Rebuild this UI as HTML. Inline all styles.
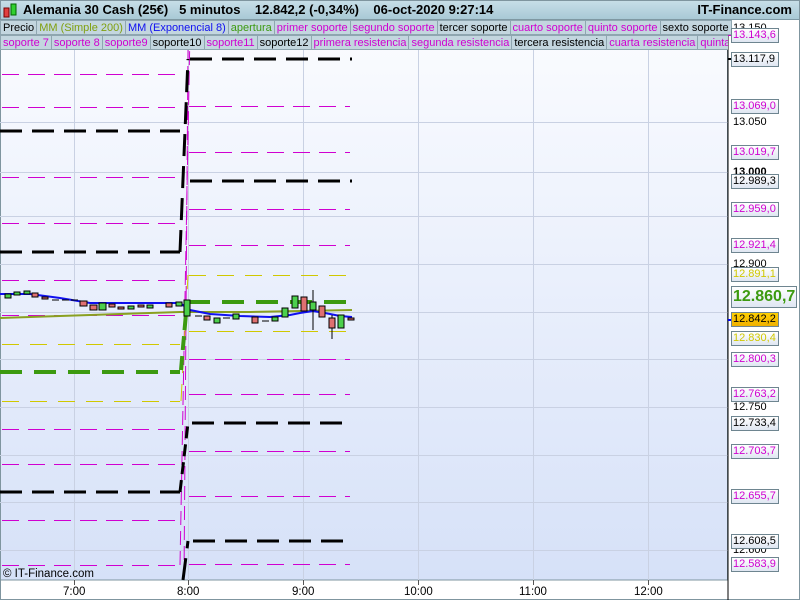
<!DOCTYPE html>
<html><head><meta charset="utf-8"><style>
*{margin:0;padding:0;box-sizing:border-box}
body{width:800px;height:600px;overflow:hidden;background:#fff;font-family:"Liberation Sans",sans-serif;position:relative}
.tbg{position:absolute;left:0;top:0;width:800px;height:20px;background:linear-gradient(#c8dfe8,#a9c9d6);border-bottom:1px solid #7f9aa6}
.title{position:absolute;left:0;top:0;width:800px;height:20px;font-weight:bold;font-size:13px;line-height:20px}
.row{position:absolute;left:0;height:15px;display:flex;font-size:11px;line-height:14px}
.row span{background:#c3d6df;border:1px solid #8fa6b0;border-left:none;padding:0 2px;white-space:nowrap}
.m{color:#d000d0}.k{color:#000}
.lab{position:absolute;left:731px;width:48px;height:15px;border:1px solid #6e8590;background:linear-gradient(#fff,#dfe6f2);font-size:11px;line-height:13px;padding-left:1px;white-space:nowrap;overflow:hidden}
.tick{position:absolute;left:733px;font-size:11px;line-height:12px}
.xl{position:absolute;top:586px;font-size:11.5px}
</style></head><body>
<div class="tbg"></div>
<svg width="800" height="600" style="position:absolute;left:0;top:0">
<defs><linearGradient id="bg" x1="0" y1="0" x2="0" y2="1"><stop offset="0" stop-color="#fbfcff"/><stop offset="1" stop-color="#d6e1f8"/></linearGradient></defs>
<rect x="0" y="20" width="728" height="560" fill="url(#bg)"/>
<rect x="0.5" y="20" width="727" height="560" fill="none" stroke="#7f959f"/>
<rect x="0.5" y="0.5" width="799" height="599" fill="none" stroke="#7f959f"/>
<g stroke="#c9d1e3" stroke-width="1">
<line x1="74.5" y1="50" x2="74.5" y2="580"/><line x1="188.5" y1="50" x2="188.5" y2="580"/><line x1="303.5" y1="50" x2="303.5" y2="580"/><line x1="418.5" y1="50" x2="418.5" y2="580"/><line x1="533.5" y1="50" x2="533.5" y2="580"/><line x1="648.5" y1="50" x2="648.5" y2="580"/>
<line x1="0" y1="122.5" x2="728" y2="122.5"/><line x1="0" y1="172.5" x2="728" y2="172.5"/><line x1="0" y1="216.5" x2="728" y2="216.5"/><line x1="0" y1="264.5" x2="728" y2="264.5"/><line x1="0" y1="312.5" x2="728" y2="312.5"/><line x1="0" y1="359.5" x2="728" y2="359.5"/><line x1="0" y1="407.5" x2="728" y2="407.5"/><line x1="0" y1="455.5" x2="728" y2="455.5"/><line x1="0" y1="502.5" x2="728" y2="502.5"/><line x1="0" y1="550.5" x2="728" y2="550.5"/>
</g>
<g stroke="#d000d0" stroke-width="1" stroke-dasharray="17 9" fill="none">
<line x1="2" y1="74.5" x2="180" y2="74.5"/><line x1="2" y1="107.5" x2="180" y2="107.5"/><line x1="2" y1="177.5" x2="180" y2="177.5"/><line x1="2" y1="223.5" x2="180" y2="223.5"/><line x1="2" y1="280.5" x2="180" y2="280.5"/><line x1="2" y1="315.5" x2="180" y2="315.5"/><line x1="2" y1="429.5" x2="180" y2="429.5"/><line x1="2" y1="464.5" x2="180" y2="464.5"/><line x1="2" y1="520.5" x2="180" y2="520.5"/><line x1="2" y1="565.5" x2="180" y2="565.5"/>
<line x1="189" y1="106.5" x2="350" y2="106.5"/><line x1="189" y1="152.5" x2="350" y2="152.5"/><line x1="189" y1="209.5" x2="350" y2="209.5"/><line x1="189" y1="245.5" x2="350" y2="245.5"/><line x1="189" y1="359.5" x2="350" y2="359.5"/><line x1="189" y1="394.5" x2="350" y2="394.5"/><line x1="189" y1="451.5" x2="350" y2="451.5"/><line x1="189" y1="496.5" x2="350" y2="496.5"/><line x1="189" y1="564.5" x2="350" y2="564.5"/>
<line x1="180" y1="565" x2="190" y2="30" stroke-dasharray="14 6"/><line x1="184" y1="580" x2="188" y2="50" stroke-dasharray="14 6"/>
</g>
<g stroke="#d0c800" stroke-width="1" stroke-dasharray="17 11">
<line x1="2" y1="344.5" x2="180" y2="344.5"/><line x1="2" y1="401.5" x2="180" y2="401.5"/><line x1="189" y1="275.5" x2="350" y2="275.5"/><line x1="189" y1="331.5" x2="350" y2="331.5"/>
<line x1="181" y1="401" x2="188" y2="275"/>
</g>
<g stroke="#000" stroke-width="3" stroke-dasharray="22 10">
<line x1="0" y1="131" x2="180" y2="131"/><line x1="0" y1="252" x2="180" y2="252"/><line x1="0" y1="492" x2="180" y2="492"/>
<line x1="190" y1="59" x2="352" y2="59"/><line x1="190" y1="181" x2="352" y2="181"/><line x1="192" y1="423" x2="345" y2="423"/><line x1="193" y1="541" x2="345" y2="541"/>
<line x1="180" y1="252" x2="188" y2="59"/><line x1="180" y1="492" x2="188" y2="423" stroke-dasharray="12 6"/><line x1="183" y1="580" x2="188" y2="541"/>
</g>
<g stroke="#3c9a10" stroke-width="4" stroke-dasharray="22 12">
<line x1="0" y1="372" x2="180" y2="372"/><line x1="188" y1="302" x2="352" y2="302"/><line x1="181" y1="370" x2="187" y2="302" stroke-dasharray="14 6"/>
</g>
<polyline fill="none" stroke="#8aa020" stroke-width="2" points="0,318 60,316 120,314 180,312 250,312 300,311 352,310"/>
<polyline fill="none" stroke="#1010f0" stroke-width="2" points="0,294 30,294 60,298 90,303 120,303 150,303 180,303 190,310 210,314 240,316 270,317 290,315 300,313 313,311 325,313 340,316 352,317"/>
<g stroke="#000" stroke-width="1">
<rect x="5" y="294" width="6" height="4" fill="#4cd04c"/><rect x="14" y="292" width="6" height="3" fill="#4cd04c"/><rect x="24" y="291" width="6" height="3" fill="#4cd04c"/><rect x="32" y="293" width="6" height="4" fill="#e07070"/><rect x="42" y="297" width="6" height="2" fill="#e07070"/>
<line x1="52" y1="300" x2="59" y2="300"/><line x1="62" y1="300" x2="69" y2="300"/><line x1="71" y1="300" x2="78" y2="300"/>
<rect x="80" y="301" width="7" height="5" fill="#e07070"/><rect x="90" y="305" width="7" height="5" fill="#e07070"/><rect x="99" y="303" width="7" height="7" fill="#4cd04c"/><rect x="109" y="304" width="6" height="3" fill="#e07070"/><rect x="118" y="307" width="6" height="2" fill="#e07070"/><rect x="128" y="306" width="6" height="3" fill="#4cd04c"/><rect x="138" y="305" width="6" height="2" fill="#e07070"/><rect x="147" y="305" width="6" height="3" fill="#4cd04c"/><rect x="166" y="303" width="6" height="4" fill="#e07070"/><rect x="176" y="302" width="6" height="4" fill="#4cd04c"/>
<rect x="184" y="300" width="6" height="16" fill="#4cd04c"/><line x1="195" y1="316" x2="202" y2="316"/><rect x="204" y="316" width="6" height="4" fill="#e07070"/><rect x="214" y="318" width="6" height="5" fill="#4cd04c"/><line x1="223" y1="318" x2="230" y2="318"/><rect x="233" y="314" width="6" height="5" fill="#4cd04c"/><rect x="252" y="317" width="6" height="6" fill="#e07070"/><line x1="262" y1="321" x2="269" y2="321"/><rect x="272" y="317" width="6" height="4" fill="#4cd04c"/><rect x="282" y="308" width="6" height="9" fill="#4cd04c"/><rect x="292" y="296" width="6" height="12" fill="#4cd04c"/><rect x="301" y="297" width="6" height="14" fill="#e07070"/><line x1="313" y1="290" x2="313" y2="330"/><rect x="310" y="302" width="6" height="8" fill="#4cd04c"/><rect x="319" y="306" width="6" height="11" fill="#e07070"/><line x1="332" y1="315" x2="332" y2="339"/><rect x="329" y="318" width="6" height="10" fill="#e07070"/><rect x="338" y="315" width="6" height="13" fill="#4cd04c"/><rect x="348" y="318" width="6" height="2" fill="#e07070"/>
</g>
<g stroke="#000"><line x1="728" y1="600" x2="728" y2="20"/></g>
<g stroke-width="2"><line x1="728" y1="59" x2="731" y2="59" stroke="#000"/><line x1="728" y1="35" x2="731" y2="35" stroke="#d000d0"/><line x1="728" y1="320" x2="731" y2="320" stroke="#00f"/></g>
<line x1="74.5" y1="580" x2="74.5" y2="585" stroke="#555"/><line x1="188.5" y1="580" x2="188.5" y2="585" stroke="#555"/><line x1="303.5" y1="580" x2="303.5" y2="585" stroke="#555"/><line x1="418.5" y1="580" x2="418.5" y2="585" stroke="#555"/><line x1="533.5" y1="580" x2="533.5" y2="585" stroke="#555"/><line x1="648.5" y1="580" x2="648.5" y2="585" stroke="#555"/>
<rect x="4" y="8" width="5" height="9" fill="#e04040" stroke="#700"/><rect x="11" y="4" width="5" height="11" fill="#30d030" stroke="#060"/>
</svg>
<div class="title"><span style="position:absolute;left:23px">Alemania 30 Cash (25€)&nbsp;&nbsp; 5 minutos&nbsp;&nbsp;&nbsp; 12.842,2 (-0,34%)&nbsp;&nbsp;&nbsp; 06-oct-2020 9:27:14</span><span style="position:absolute;right:8px">IT-Finance.com</span></div>
<div class="row" style="top:20px"><span class="k" style="border-left:1px solid #8fa6b0">Precio</span><span style="color:#80a010">MM (Simple 200)</span><span style="color:#1010f0">MM (Exponencial 8)</span><span style="color:#3c9a10">apertura</span><span class="m">primer soporte</span><span class="m">segundo soporte</span><span class="k">tercer soporte</span><span class="m">cuarto soporte</span><span class="m">quinto soporte</span><span class="k">sexto soporte</span></div>
<div class="row" style="top:35px;width:728px;overflow:hidden"><span class="m" style="border-left:1px solid #8fa6b0">soporte 7</span><span class="m">soporte 8</span><span class="m">soporte9</span><span class="k">soporte10</span><span class="m">soporte11</span><span class="k">soporte12</span><span class="m">primera resistencia</span><span class="m">segunda resistencia</span><span class="k">tercera resistencia</span><span class="m">cuarta resistencia</span><span class="m">quinta resistencia</span></div>
<div class="tick" style="top:22px">13.150</div><div class="tick" style="top:116px">13.050</div><div class="tick" style="top:166px;font-weight:bold">13.000</div><div class="tick" style="top:258px">12.900</div><div class="tick" style="top:401px">12.750</div><div class="tick" style="top:544px">12.600</div>
<div class="lab m" style="top:28px">13.143,6</div>
<div class="lab k" style="top:52px">13.117,9</div>
<div class="lab m" style="top:99px">13.069,0</div>
<div class="lab m" style="top:145px">13.019,7</div>
<div class="lab k" style="top:174px">12.989,3</div>
<div class="lab m" style="top:202px">12.959,0</div>
<div class="lab m" style="top:238px">12.921,4</div>
<div class="lab" style="top:267px;color:#d0c800">12.891,1</div>
<div class="lab" style="top:286px;width:66px;height:22px;font-size:16px;line-height:19px;color:#3c9a10;font-weight:bold">12.860,7</div>
<div class="lab k" style="top:312px;background:linear-gradient(#ffd000,#f0b000)">12.842,2</div>
<div class="lab" style="top:331px;color:#d0c800">12.830,4</div>
<div class="lab m" style="top:352px">12.800,3</div>
<div class="lab m" style="top:387px">12.763,2</div>
<div class="lab k" style="top:416px">12.733,4</div>
<div class="lab m" style="top:444px">12.703,7</div>
<div class="lab m" style="top:489px">12.655,7</div>
<div class="lab k" style="top:534px">12.608,5</div>
<div class="lab m" style="top:557px">12.583,9</div>
<div style="position:absolute;left:3px;top:568px;font-size:11.5px">© IT-Finance.com</div>
<div class="xl" style="left:63px">7:00</div><div class="xl" style="left:177px">8:00</div><div class="xl" style="left:292px">9:00</div><div class="xl" style="left:404px">10:00</div><div class="xl" style="left:519px">11:00</div><div class="xl" style="left:634px">12:00</div>
</body></html>
